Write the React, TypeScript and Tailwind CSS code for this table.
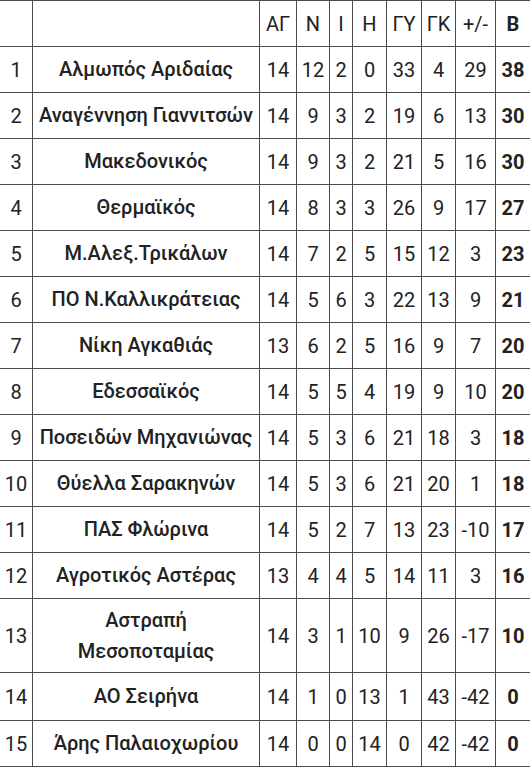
const rows: [number, string, number, number, number, number, number, number, number, number][] = [
  [1, "Αλμωπός Αριδαίας", 14, 12, 2, 0, 33, 4, 29, 38],
  [2, "Αναγέννηση Γιαννιτσών", 14, 9, 3, 2, 19, 6, 13, 30],
  [3, "Μακεδονικός", 14, 9, 3, 2, 21, 5, 16, 30],
  [4, "Θερμαϊκός", 14, 8, 3, 3, 26, 9, 17, 27],
  [5, "Μ.Αλεξ.Τρικάλων", 14, 7, 2, 5, 15, 12, 3, 23],
  [6, "ΠΟ Ν.Καλλικράτειας", 14, 5, 6, 3, 22, 13, 9, 21],
  [7, "Νίκη Αγκαθιάς", 13, 6, 2, 5, 16, 9, 7, 20],
  [8, "Εδεσσαϊκός", 14, 5, 5, 4, 19, 9, 10, 20],
  [9, "Ποσειδών Μηχανιώνας", 14, 5, 3, 6, 21, 18, 3, 18],
  [10, "Θύελλα Σαρακηνών", 14, 5, 3, 6, 21, 20, 1, 18],
  [11, "ΠΑΣ Φλώρινα", 14, 5, 2, 7, 13, 23, -10, 17],
  [12, "Αγροτικός Αστέρας", 13, 4, 4, 5, 14, 11, 3, 16],
  [13, "Αστραπή\nΜεσοποταμίας", 14, 3, 1, 10, 9, 26, -17, 10],
  [14, "ΑΟ Σειρήνα", 14, 1, 0, 13, 1, 43, -42, 0],
  [15, "Άρης Παλαιοχωρίου", 14, 0, 0, 14, 0, 42, -42, 0],
];

const heads = ["", "", "ΑΓ", "Ν", "Ι", "Η", "ΓΥ", "ΓΚ", "+/-", "Β"];

const cell = "flex items-center justify-center border-b border-r border-[#4d4d4d] text-center";

export default function App() {
  return (
    <div
      className="min-h-[768px] bg-white text-[20px] text-[#222] overflow-hidden"
      style={{ fontFamily: "Roboto, 'Noto Sans', sans-serif" }}
    >
      <div className="grid grid-cols-[33px_227px_37px_33px_23px_34px_35px_34px_40px_34px] border-t border-[#4d4d4d]">
        {heads.map((h, i) => (
          <div
            key={i}
            className={`${cell} h-[46px] ${i === 9 ? "font-bold border-r-0" : ""}`}
          >
            {h}
          </div>
        ))}
        {rows.map((r) => {
          const h = r[0] === 13 ? "h-[74px]" : r[0] === 14 ? "h-[48px]" : "h-[46px]";
          return r.map((v, i) => (
            <div
              key={`${r[0]}-${i}`}
              className={`${cell} ${h} ${i === 1 ? "font-medium leading-[31px] whitespace-pre-line" : ""} ${
                i === 9 ? "font-bold border-r-0" : ""
              }`}
            >
              {v}
            </div>
          ));
        })}
      </div>
    </div>
  );
}
